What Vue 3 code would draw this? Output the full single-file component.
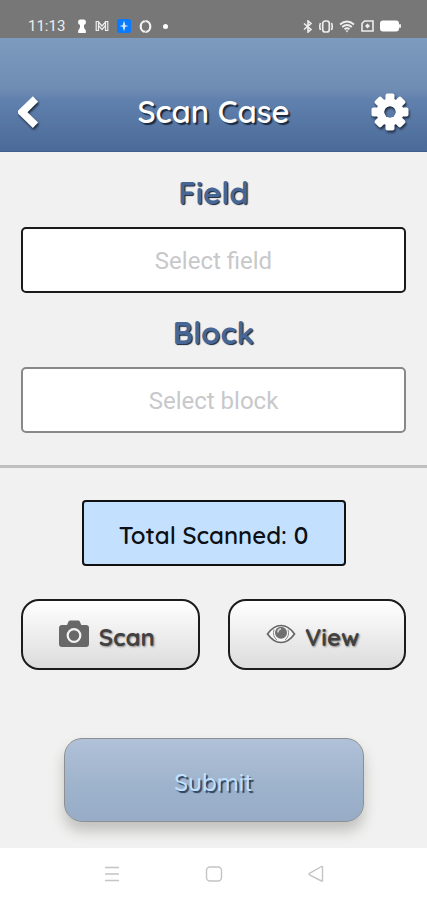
<script setup>
import { ref } from 'vue'

const field = ref('')
const block = ref('')
const total = ref(0)
</script>

<template>
  <div class="screen">
    <div class="status">
      <div class="status-group">
        <time class="clock">11:13</time>
        <svg class="person" width="10" height="14" viewBox="0 0 10 14" aria-hidden="true">
          <path d="M3 .5h4q2 0 2 2.500T7 6v2q0 1.500 1.800 3.200V14H1.200v-2.800Q3 9.500 3 8V6Q1 5.500 1 3T3 .5z" fill="#fff" />
        </svg>
        <svg class="mail" width="14" height="12" viewBox="0 0 14 12" aria-hidden="true">
          <g fill="none" stroke="#eee" stroke-width="1.200">
            <path d="M3.500 1.500H1.200v9h2.300zM10.500 1.500h2.300v9h-2.300z" />
            <path d="M3.500 2l3.500 4 3.500-4M3.500 5.500l3.500 4 3.500-4" />
          </g>
        </svg>
        <svg class="app" width="14" height="14" viewBox="0 0 14 14" aria-hidden="true">
          <rect width="14" height="14" rx="2.500" fill="#0a7bff" />
          <path d="M7 2.500v9M7 4L5.800 7l1.200 3L8.200 7zM3.500 7h7" stroke="#d6eaff" stroke-width="1" fill="#d6eaff" />
        </svg>
        <svg class="ring" width="13" height="13" viewBox="0 0 13 13" aria-hidden="true">
          <ellipse cx="6.500" cy="6.500" rx="4.800" ry="5.300" fill="none" stroke="#f4f4f4" stroke-width="2.200" />
          <path d="M5.500 0l2 2.500M5.500 13l2-2.500" stroke="#777" stroke-width="0.600" />
        </svg>
        <span class="dot"></span>
      </div>
      <div class="status-group right">
        <svg width="10" height="13" viewBox="0 0 10 13" aria-hidden="true">
          <path d="M1 3.500l7 6L5 12V1l3 2.500-7 6" fill="none" stroke="#eee" stroke-width="1.600" />
        </svg>
        <svg width="14" height="13" viewBox="0 0 14 13" aria-hidden="true">
          <rect x="3.700" y="1" width="6.600" height="11" rx="2.500" fill="none" stroke="#eee" stroke-width="1.700" />
          <path d="M1.500 3Q0 6.500 1.500 10M12.500 3Q14 6.500 12.500 10" fill="none" stroke="#eee" stroke-width="1.600" />
        </svg>
        <svg width="16" height="13" viewBox="0 0 16 13" aria-hidden="true">
          <g fill="none" stroke="#eee" stroke-width="1.900">
            <path d="M1 4.500Q8-1.500 15 4.500M3.200 7Q8 3 12.800 7M5.500 9.300Q8 7.300 10.500 9.300" />
          </g>
          <path d="M6.500 10.500h3L8 12.500z" fill="#eee" />
        </svg>
        <svg width="13" height="12" viewBox="0 0 13 12" aria-hidden="true">
          <path d="M3.500 1H12v10H1V3.500z" fill="none" stroke="#eee" stroke-width="1.600" />
          <path d="M6.500 3.500L9 6 6.500 8.500 4 6z" fill="#eee" />
        </svg>
        <svg width="21" height="12" viewBox="0 0 21 12" aria-hidden="true">
          <rect x="0" y="0.500" width="19" height="11" rx="3" fill="#fff" />
          <rect x="19" y="4" width="2" height="4" rx="1" fill="#eee" />
        </svg>
      </div>
    </div>

    <header class="header">
      <button class="icon-button" type="button" aria-label="Back">
        <svg width="24" height="34" viewBox="0 0 24 34" aria-hidden="true">
          <path d="M17.500 4L4 17.200l13.500 13" fill="none" stroke="#fff" stroke-width="7.500" />
        </svg>
      </button>
      <h1 class="title">Scan Case</h1>
      <button class="icon-button end" type="button" aria-label="Settings">
        <svg width="38" height="38" viewBox="-19 -19 38 38" aria-hidden="true">
          <g fill="#fff">
            <rect v-for="a in [0, 45, 90, 135]" :key="a" x="-4.500" y="-18.500" width="9" height="37" rx="2" :transform="`rotate(${a})`" mask="url(#hub)" />
            <circle r="13.500" mask="url(#hub)" />
          </g>
          <mask id="hub" maskUnits="userSpaceOnUse" x="-19" y="-19" width="38" height="38">
            <rect x="-19" y="-19" width="38" height="38" fill="#fff" />
            <circle r="6" fill="#000" />
          </mask>
        </svg>
      </button>
    </header>

    <main class="content">
      <section class="selectors">
        <label class="label" for="field">Field</label>
        <input id="field" v-model="field" class="box active" type="text" placeholder="Select field" />
        <label class="label" for="block">Block</label>
        <input id="block" v-model="block" class="box" type="text" placeholder="Select block" />
      </section>

      <section class="actions">
        <output class="total">Total Scanned: {{ total }}</output>
        <div class="pair">
          <button class="action" type="button">
            <svg width="32" height="28" viewBox="0 0 32 28" aria-hidden="true">
              <path d="M4 5h5l1.500-3.500Q11 .5 12.200 .5h8Q21.300 .5 21.800 1.500L23.300 5H28q3 0 3 3v16q0 3-3 3H4q-3 0-3-3V8q0-3 3-3z" fill="#686868" />
              <circle cx="16" cy="15.500" r="6.300" fill="none" stroke="#f3f3f3" stroke-width="2.200" />
            </svg>
            <span class="action-text">Scan</span>
          </button>
          <button class="action" type="button">
            <svg width="30" height="28" viewBox="0 0 30 28" aria-hidden="true">
              <path d="M1.500 14Q7.500 5.500 15 5.500T28.500 14Q22.500 22.500 15 22.500T1.500 14z" fill="#f7f7f7" stroke="#666" stroke-width="1.700" />
              <path d="M8 9.500q-2 6.500 3 10.500M22 9.500q2 6.500-3 10.500" fill="none" stroke="#888" />
              <circle cx="15" cy="12.800" r="6" fill="#707070" />
              <path d="M11.800 12.500q0-3.200 3.200-3.700" fill="none" stroke="#d8d8d8" stroke-width="1.400" />
            </svg>
            <span class="action-text">View</span>
          </button>
        </div>
        <button class="submit" type="button">Submit</button>
      </section>
    </main>

    <nav class="nav" aria-label="System">
      <button class="nav-button" type="button" aria-label="Recent apps">
        <svg width="18" height="18" viewBox="0 0 18 18" aria-hidden="true">
          <path d="M2 2.500h14M2 9h14M2 15.500h14" stroke="#c4c4c4" stroke-width="1.500" />
        </svg>
      </button>
      <button class="nav-button" type="button" aria-label="Home">
        <svg width="18" height="18" viewBox="0 0 18 18" aria-hidden="true">
          <rect x="1.500" y="2" width="15" height="14" rx="3.500" fill="none" stroke="#c4c4c4" stroke-width="1.400" />
        </svg>
      </button>
      <button class="nav-button" type="button" aria-label="Back">
        <svg width="18" height="18" viewBox="0 0 18 18" aria-hidden="true">
          <path d="M15.500 2.500v13q0 1-1 .5L2.500 9.800q-1-.8 0-1.500L14.500 1.500q1-.5 1 1z" fill="none" stroke="#c4c4c4" stroke-width="1.400" />
        </svg>
      </button>
    </nav>
  </div>
</template>

<style>
body {
  background: #f1f1f1;
}
</style>

<style scoped>
* {
  box-sizing: border-box;
}

.screen {
  display: flex;
  flex-direction: column;
  min-height: 100vh;
  background: #f1f1f1;
  font-family: Quicksand, Inter, "Liberation Sans", sans-serif;
}

button {
  font-family: inherit;
  cursor: pointer;
}

svg {
  display: block;
  flex: none;
}

.status {
  display: flex;
  justify-content: space-between;
  align-items: center;
  height: 38px;
  padding: 14px 26px 0 28px;
  background: #777;
}

.status-group {
  display: flex;
  align-items: center;
  gap: 8px;
}

.status-group.right {
  gap: 6px;
}

.clock {
  margin-right: 4px;
  font: 15px/18px Roboto, sans-serif;
  color: #eee;
}

.dot {
  width: 5px;
  height: 5px;
  margin-left: 3px;
  border-radius: 50%;
  background: #fff;
}

.header {
  display: grid;
  grid-template-columns: 48px 1fr 48px;
  align-items: center;
  height: 114px;
  padding: 34px 18px 0;
  border-bottom: 1px solid #3f5d8c;
  background: linear-gradient(#7d9abf, #6f8cb3 45%, #6080ad 55%, #4b6a97);
}

.icon-button {
  justify-self: start;
  padding: 0;
  border: 0;
  background: none;
}

.icon-button.end {
  justify-self: end;
}

.icon-button svg {
  filter: drop-shadow(1px 2px 1px #1c2a40);
}

.title {
  margin: 0;
  text-align: center;
  font-size: 31px;
  line-height: 36px;
  font-weight: 600;
  color: #fff;
  text-shadow: 2px 2px 1px #1c2a40;
}

.content {
  flex: 1;
}

.selectors {
  display: flex;
  flex-direction: column;
  padding: 17px 21px 32px;
  border-bottom: 3px solid #bfbfbf;
}

.label {
  margin-bottom: 10px;
  text-align: center;
  font-size: 31px;
  line-height: 48px;
  font-weight: 700;
  color: #466695;
  text-shadow: 1px 1px 1px #142238;
}

.box {
  width: 100%;
  height: 66px;
  padding: 2px 16px 0;
  border: 2px solid #888;
  border-radius: 5px;
  background: #fff;
  text-align: center;
  font: 24px/32px Roboto, sans-serif;
  color: #333;
}

.box.active {
  margin-bottom: 16px;
  border-color: #1a1a1a;
}

.box::placeholder {
  color: #c8c8ca;
  opacity: 1;
}

.actions {
  display: flex;
  flex-direction: column;
  align-items: center;
  padding: 32px 21px 26px;
}

.total {
  display: flex;
  align-items: center;
  justify-content: center;
  width: 264px;
  height: 66px;
  padding-top: 4px;
  border: 2px solid #111;
  border-radius: 4px;
  background: #c3e1ff;
  font-size: 24px;
  line-height: 30px;
  font-weight: 600;
  color: #0c0f14;
}

.pair {
  display: grid;
  grid-template-columns: 1fr 1fr;
  gap: 28px;
  width: 100%;
  margin-top: 33px;
}

.action {
  display: flex;
  align-items: center;
  justify-content: center;
  gap: 9px;
  height: 71px;
  padding: 0 8px 2px 0;
  border: 2px solid #1c1c1c;
  border-radius: 18px;
  background: linear-gradient(#fff, #dcdcdc);
  font-size: 24px;
  line-height: 30px;
  font-weight: 700;
  color: #414141;
}

.action-text {
  padding-top: 7px;
  text-shadow: 1px 1px 2px #888;
}

.submit {
  width: 300px;
  height: 84px;
  margin-top: 68px;
  padding-top: 4px;
  border: 1px solid #8d8f90;
  border-radius: 18px;
  background: linear-gradient(#b0c1d8, #9cb1ca 65%, #98acc7);
  box-shadow: 0 9px 14px #c0c0bd;
  font-size: 24px;
  line-height: 30px;
  font-weight: 500;
  color: #c3e1ff;
  text-shadow: 2px 2px 1px #2b4058;
}

.nav {
  display: grid;
  grid-template-columns: repeat(3, 102px);
  justify-content: center;
  align-items: center;
  height: 52px;
  background: #fff;
}

.nav-button {
  justify-self: center;
  padding: 0;
  border: 0;
  background: none;
}
</style>
